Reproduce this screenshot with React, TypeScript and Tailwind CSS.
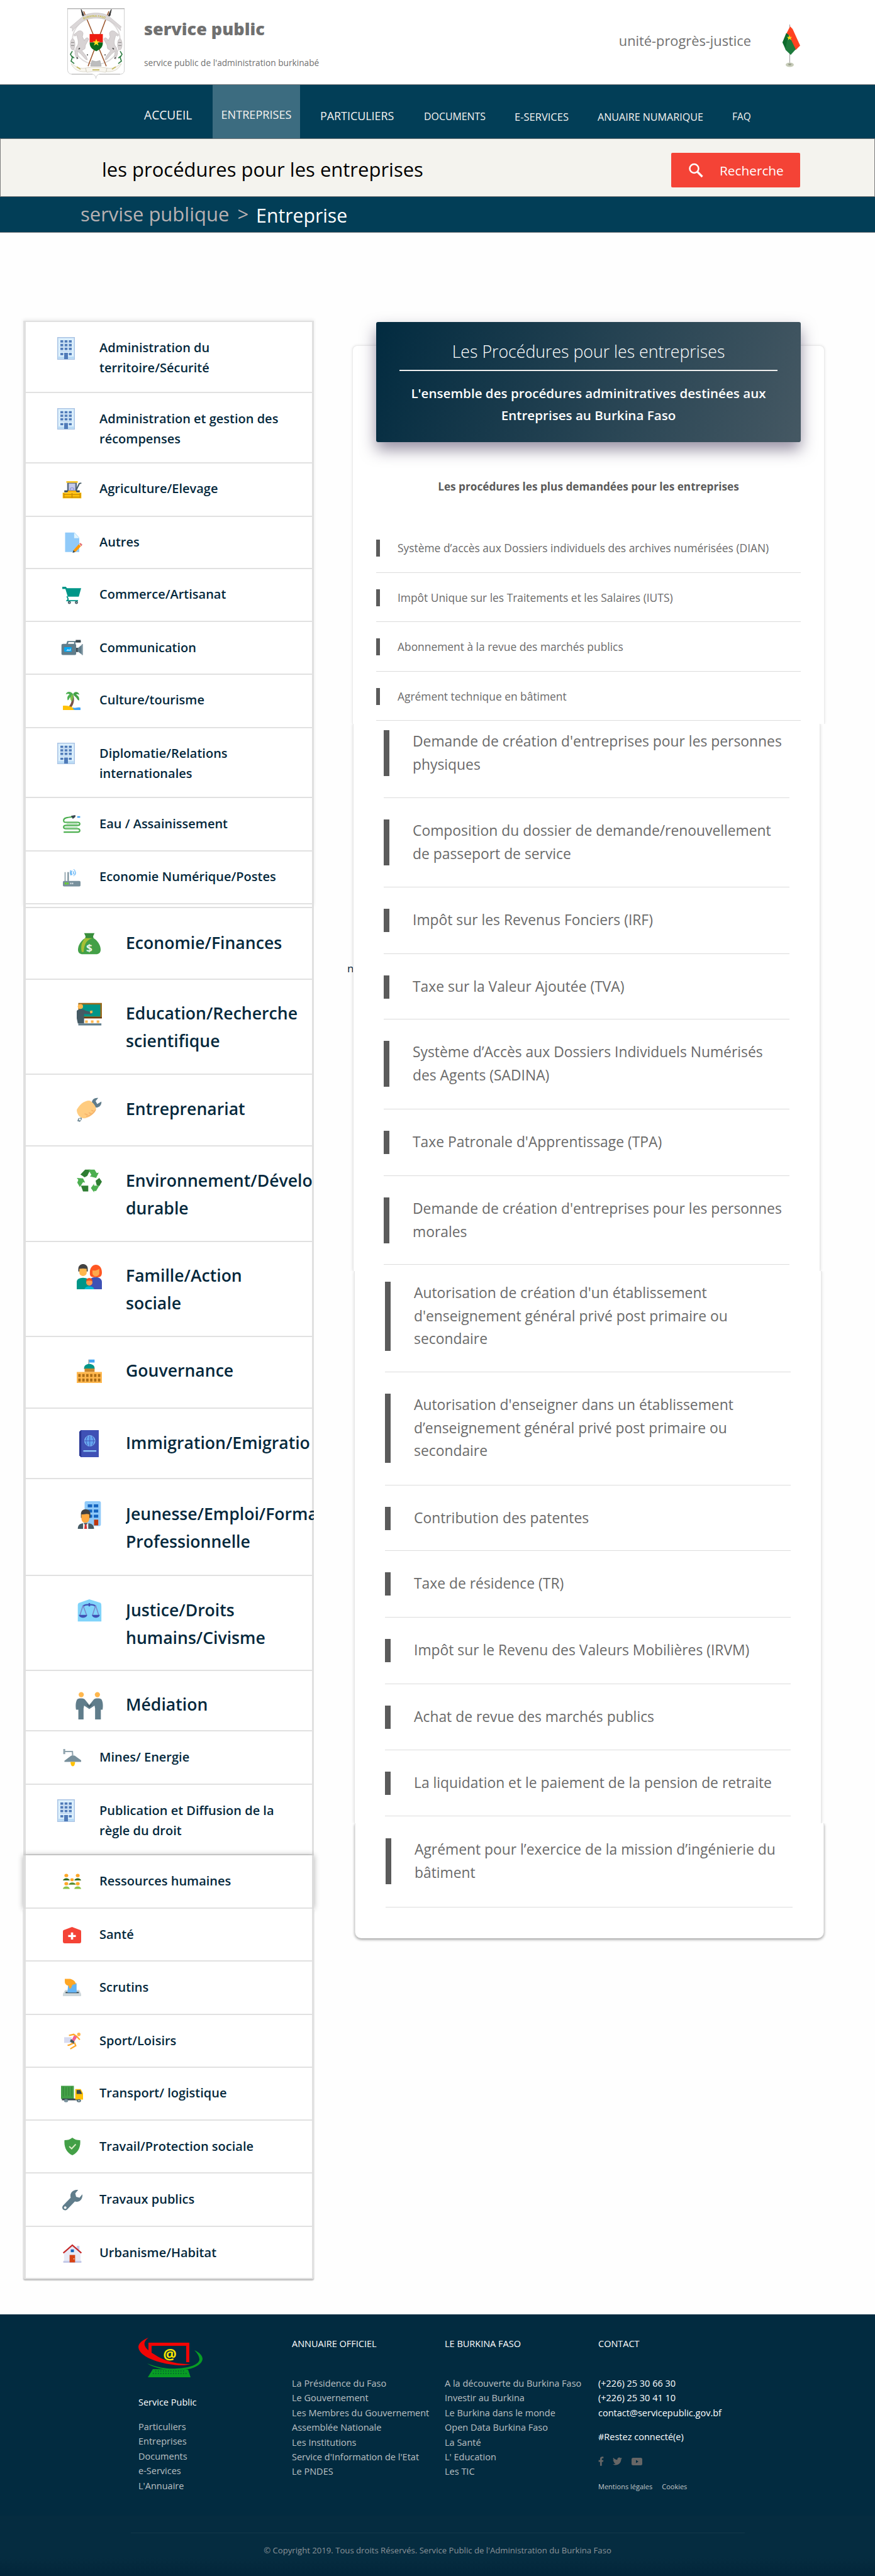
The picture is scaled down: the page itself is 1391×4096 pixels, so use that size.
import type { ReactNode } from 'react';
import { FaFacebookF, FaTwitter } from 'react-icons/fa';

type IconProps = { className: string };

function Svg({ className, children, box = '0 0 48 48' }: { className: string; children: ReactNode; box?: string }) {
  return (
    <svg viewBox={box} preserveAspectRatio="none" className={'shrink-0 ' + className} fill="none">
      {children}
    </svg>
  );
}

const Building = ({ className }: IconProps) => (
  <Svg className={className} box="0 0 28 36">
    <rect x="0.75" y="0.75" width="26.5" height="34.5" fill="#dcf0fd" stroke="#a9c3e4" strokeWidth="1.5" />
    <rect x="1.5" y="31" width="25" height="3.5" fill="#b8daf5" />
    {[5, 11, 17, 25.2].map((y) => (
      <g key={y} fill="#4f7ab8">
        <rect x="5" y={y} width="4.6" height="3.6" />
        <rect x="11.7" y={y} width="4.6" height="3.6" />
        <rect x="18.4" y={y} width="4.6" height="3.6" />
      </g>
    ))}
    <path d="M4.5 9.8h19M4.5 15.8h19M4.5 22.5h19" stroke="#a9c3e4" strokeWidth="0.8" />
    <rect x="11" y="25" width="6" height="10" fill="#4f7ab8" />
  </Svg>
);

const Tractor = ({ className }: IconProps) => (
  <Svg className={className}>
    <path d="M10 2h28v4H10z" fill="#ffc107" />
    <path d="M12 6h24v22H12z" fill="#5b6a80" />
    <path d="M16 8h16v18H16z" fill="#c5cae9" />
    <path d="M20 26v-4c0-4 8-4 8 0v4z" stroke="#8a90d8" strokeWidth="2" />
    <path d="M47 7l-5 1-8 18" stroke="#455a64" strokeWidth="3" />
    <path d="M5 26h9v5H5zM34 26h9v5h-9z" fill="#37474f" />
    <path d="M15 27h18l3 5H12z" fill="#ffb300" />
    <path d="M1 32h46v15H1z" fill="#ffc107" />
    <path d="M3 37h42M3 44h42M4 33v13M24 33v13M44 33v13" stroke="#c98a04" strokeWidth="2.4" />
  </Svg>
);

const Paper = ({ className }: IconProps) => (
  <Svg className={className}>
    <path d="M4 1h24l12 12v33H4z" fill="#90caf9" />
    <path d="M27 1l13 13H27z" fill="#e1f5fe" />
    <path d="M25 42l14-14 5 5-14 13z" fill="#ff9800" />
    <path d="M40 27l3-2 5 4-3 4z" fill="#e57373" />
    <path d="M23 48l2-6 5 4z" fill="#37474f" />
  </Svg>
);

const Cart = ({ className }: IconProps) => (
  <Svg className={className}>
    <path d="M0 0h9l3 4h36l-6 23H14L8 6H0z" fill="#009688" />
    <path d="M12 26l3 8-3 4h28" stroke="#009688" strokeWidth="3" />
    <circle cx="18" cy="43" r="4" fill="#455a64" />
    <circle cx="36" cy="43" r="4" fill="#455a64" />
    <circle cx="18" cy="43" r="1.5" fill="#b0bec5" />
    <circle cx="36" cy="43" r="1.5" fill="#b0bec5" />
  </Svg>
);

const Camera = ({ className }: IconProps) => (
  <Svg className={className}>
    <path d="M13 15l2-9h28" stroke="#607d8b" strokeWidth="3.4" />
    <path d="M30 6v9" stroke="#607d8b" strokeWidth="3" />
    <path d="M32 1h11v8H32z" fill="#37474f" />
    <rect x="1" y="13" width="32" height="34" rx="4" fill="#607d8b" />
    <rect x="7" y="23" width="16" height="14" fill="#03a9f4" />
    <path d="M11 34l4-5 3 3 3-6v8z" fill="#bbdefb" />
    <path d="M33 25h4v13h-4z" fill="#37474f" />
    <path d="M36 27l11-13v33L36 36z" fill="#607d8b" />
    <path d="M45 14h3v33h-3z" fill="#90a4ae" />
  </Svg>
);

const Palm = ({ className }: IconProps) => (
  <Svg className={className}>
    <path d="M28 10c5 12 1 24-5 31h-9c9-8 12-18 10-31z" fill="#795548" />
    <path d="M28 8C22-1 10 0 8 8c6-2 8-1 10 1-6 2-7 8-5 14 4-1 4-6 7-8 0 5 2 8 5 11 3-5 4-12 3-18z" fill="#4caf50" />
    <path d="M28 8c2-8 14-8 17 1-5-2-7-2-9 0 6 2 10 8 8 15-5-2-6-7-9-9-2-2-6-4-7-7z" fill="#43a047" />
    <path d="M26 8c-6 6-6 10-3 18 4-4 5-12 3-18z" fill="#8bc34a" />
    <path d="M0 37c12-1 22 2 29 6l19 1v4H0z" fill="#ffc107" />
    <path d="M27 41c6 4 11-2 21 1v6H34c-4 0-7-3-7-7z" fill="#42a5f5" />
  </Svg>
);

const Hose = ({ className }: IconProps) => (
  <Svg className={className}>
    <path d="M26 5C10 6 2 8 2 14c0 6 4 5 10 5h28c8 0 8 8 0 8H8c-8 0-8 9 0 9h32c8 0 8 9 0 9H2" stroke="#4caf50" strokeWidth="3.6" />
    <path d="M6 32h34M10 23h30" stroke="#a5d6a7" strokeWidth="2" />
    <path d="M22 2l12-2v5l-7 5z" fill="#37474f" />
    <path d="M39 3h8v4h-8z" fill="#42a5f5" />
  </Svg>
);

const Router = ({ className }: IconProps) => (
  <Svg className={className}>
    <path d="M6 8v26M15 8v26" stroke="#90a4ae" strokeWidth="3" />
    <path d="M13.500 8v24" stroke="#546e7a" strokeWidth="1.6" />
    <rect x="0" y="32" width="48" height="15" rx="3" fill="#78909c" />
    <path d="M5 39h12" stroke="#64dd17" strokeWidth="5" strokeDasharray="4 2" />
    <path d="M20 39h9" stroke="#e0e6ea" strokeWidth="4" strokeDasharray="3 2" />
    <path d="M25 4c-3 4-3 8 0 12M32 4c3 4 3 8 0 12M21 3c-1 3-1 10 1 14M28.500 6v8" stroke="#64b5f6" strokeWidth="2.4" />
    <path d="M29 0c6 4 6 13 0 19" stroke="#90caf9" strokeWidth="2" />
  </Svg>
);

const MoneyBag = ({ className }: IconProps) => (
  <Svg className={className}>
    <path d="M13 1h22l-3 7 1 5H15l1-5z" fill="#388e3c" />
    <path d="M15 12h18c8 5 15 15 15 25 0 7-4 10-10 10H10C4 47 0 44 0 37c0-10 7-20 15-25z" fill="#43a047" />
    <path d="M15 12h16c-12 3-18 12-19 30H8c-3-12 0-22 7-30z" fill="#a4bf35" />
    <text x="24" y="41" textAnchor="middle" fontFamily="Open Sans, sans-serif" fontSize="23" fontWeight="700" fill="#e8f5e9">$</text>
  </Svg>
);

const Teacher = ({ className }: IconProps) => (
  <Svg className={className}>
    <path d="M3 1h45v31H3z" fill="#9a6a1c" />
    <path d="M6 4h39v24H6z" fill="#009688" />
    <path d="M8 32h40v-3H8z" fill="#6d3b12" />
    <circle cx="7" cy="8" r="5" fill="#ffb74d" />
    <path d="M0 17c2-4 12-5 16-1l13 4-1 4-14-1v19H2L0 32z" fill="#455a64" />
    <path d="M25 17l5-1v5l-4 1z" fill="#ffb74d" />
    <path d="M16 36h5v5h-5zM27 36h5v5h-5zM38 36h5v5h-5z" fill="#ffb74d" />
    <path d="M3 42h44v4H3z" fill="#607d8b" />
  </Svg>
);

const HandWrench = ({ className }: IconProps) => (
  <Svg className={className}>
    <path d="M29 12c-1-7 4-12 12-11l-5 6 3 6 8-5c1 8-6 14-14 11z" fill="#607d8b" />
    <path d="M0 24C5 14 14 6 24 6c6 2 13 11 13 17-4 10-13 16-22 18C6 41 0 33 0 24z" fill="#ffcc80" />
    <path d="M18 37c6 0 15-6 18-13M15 32l6 2M23 30l5 2M28 25l4 2" stroke="#f5b26b" strokeWidth="2" />
    <path d="M9 39l-6 2-2 5 5 2 4-6z" fill="#78909c" />
    <circle cx="6" cy="43" r="1.800" fill="#fff" />
  </Svg>
);

const Recycle = ({ className }: IconProps) => (
  <Svg className={className}>
    <path d="M16 1h10l-6 13-5 3-8-6z" fill="#2e7d32" />
    <path d="M22 1h12l4 7 4-1-5 11-12-3 3-3z" fill="#4caf50" />
    <path d="M36 24l7-6 5 8-5 9-5-2z" fill="#2e7d32" />
    <path d="M27 39l6-9v4h10l-6 11h-4v3z" fill="#4caf50" />
    <path d="M8 34h14v12H12z" fill="#2e7d32" />
    <path d="M0 18l12 1 4 9-4-1-6 10-5-9 2-6z" fill="#4caf50" />
  </Svg>
);

const Family = ({ className }: IconProps) => (
  <Svg className={className}>
    <path d="M0 34c0-6 7-8 12-8s12 2 12 7v15H0z" fill="#009688" />
    <path d="M24 33c0-5 6-8 12-8s12 3 12 9v14H24z" fill="#3f51b5" />
    <path d="M3 9c0-12 18-12 18 0v5H3z" fill="#424242" />
    <path d="M5 9c5-1 9-1 14 0v7c0 9-14 9-14 0z" fill="#ffb74d" />
    <path d="M25 18c-1-22 23-22 23-2 0 8-4 10-12 9-6 0-11 0-11-7z" fill="#ff5722" />
    <path d="M30 12c4 1 9 0 13-3v8c0 8-13 8-13 0z" fill="#ffa94d" />
    <circle cx="24" cy="35" r="6" fill="#ff9a50" />
    <path d="M18 33c0-9 12-9 12 0-3-2-9-2-12 0z" fill="#f4511e" />
    <path d="M15 48c0-7 18-7 18 0z" fill="#00bcd4" />
  </Svg>
);

const Government = ({ className }: IconProps) => (
  <Svg className={className}>
    <path d="M24 1h10v6H24z" fill="#42a5f5" />
    <path d="M23 1v10" stroke="#78909c" strokeWidth="1.500" />
    <path d="M14 18c0-11 20-11 20 0v2H14z" fill="#009688" />
    <path d="M15 19h19v7H15z" fill="#c9852b" />
    <path d="M0 26h48v22H0z" fill="#ffb74d" />
    <path d="M3 33h42M3 42h42" stroke="#ab6d17" strokeWidth="6" strokeDasharray="4.500 3" />
  </Svg>
);

const Passport = ({ className }: IconProps) => (
  <Svg className={className}>
    <path d="M0 3l4-3h44v48H4l-4-3z" fill="#3f51b5" />
    <path d="M0 3l5-3v48l-5-3z" fill="#283593" />
    <ellipse cx="26" cy="19" rx="13" ry="9.500" fill="#64a5f0" stroke="#90caf9" />
    <path d="M26 10v19M13 19h26M20 11c-4 5-4 12 0 16M32 11c4 5 4 12 0 16" stroke="#3f51b5" strokeWidth="1.300" />
    <path d="M10 37h32" stroke="#90caf9" strokeWidth="2.600" />
  </Svg>
);

const Youth = ({ className }: IconProps) => (
  <Svg className={className}>
    <rect x="15" y="0" width="31" height="43" rx="3" fill="#90caf9" />
    <path d="M21 8h20M21 17h20M21 26h20" stroke="#1565c0" strokeWidth="5" strokeDasharray="8.500 3" />
    <path d="M33 32h8v10h-8z" fill="#bf360c" />
    <path d="M8 23c-1-12 19-12 18 0v6H8z" fill="#424242" />
    <path d="M9 23c6 0 10-2 15 0v7c0 10-15 10-15 0z" fill="#ffa940" />
    <path d="M2 48c0-8 6-10 15-10s16 2 16 10z" fill="#455a64" />
    <path d="M12 37l5 5 5-5v11H12z" fill="#eceff1" />
    <path d="M15.500 40h3l1 8h-5z" fill="#d32f2f" />
  </Svg>
);

const Justice = ({ className }: IconProps) => (
  <Svg className={className}>
    <path d="M24 0l20 7c3 1 3 4 3 8v32H2V14c0-5 1-6 4-7z" fill="#81d4fa" />
    <path d="M12 15c4-5 20-5 24 0M24 8v7" stroke="#3f51b5" strokeWidth="3" />
    <path d="M12 13L6 34M12 13l7 21M36 13l-6 21M36 13l6 21" stroke="#7986cb" strokeWidth="1.800" />
    <path d="M4 33h16c-1 8-15 8-16 0zM29 33h15c-1 8-14 8-15 0z" fill="#3f51b5" />
  </Svg>
);

const Mediation = ({ className }: IconProps) => (
  <Svg className={className}>
    <circle cx="10" cy="5" r="4.500" fill="#ffb74d" />
    <circle cx="38" cy="5" r="4.500" fill="#ffb74d" />
    <path d="M3 13c3-2 10-2 13 0l8 10 8-10c3-2 10-2 13 0 3 5 3 12 2 18h-3v17H34V29l-1-5-9 6-9-6-1 5v19H5V31H1c-1-6-1-13 2-18z" fill="#607d8b" />
    <path d="M20 22l4 4 4-4" stroke="#455a64" strokeWidth="1.500" />
  </Svg>
);

const Lamp = ({ className }: IconProps) => (
  <Svg className={className}>
    <path d="M1 0h5v14H1z" fill="#90a4ae" />
    <path d="M5 7h20l1 14" stroke="#90a4ae" strokeWidth="3.400" />
    <path d="M22 18h9l17 13v4H4v-3z" fill="#78909c" />
    <path d="M20 35h12c0 6-2 12-6 12s-6-6-6-12z" fill="#ffc107" />
  </Svg>
);

const People = ({ className }: IconProps) => (
  <Svg className={className}>
    <path d="M0 21c2-9 16-9 18 0zM30 21c2-9 16-9 18 0z" fill="#33691e" />
    <path d="M15 34c2-9 17-9 19 0z" fill="#558b2f" />
    <path d="M0 47c1-10 17-10 18 0zM30 47c1-10 17-10 18 0z" fill="#8bc34a" />
    <g fill="#ffa726">
      <circle cx="9" cy="6" r="5" />
      <circle cx="39" cy="6" r="5" />
      <circle cx="24" cy="19" r="4.500" />
      <circle cx="9" cy="31" r="5" />
      <circle cx="39" cy="31" r="5" />
    </g>
  </Svg>
);

const Health = ({ className }: IconProps) => (
  <Svg className={className}>
    <path d="M24 0l22 9c2 1 2 4 2 8v24c0 5-1 7-5 7H5c-4 0-5-2-5-7V17c0-4 0-7 2-8z" fill="#f44336" />
    <path d="M24 16v21M14 26.500h20" stroke="#fff" strokeWidth="6" />
  </Svg>
);

const Vote = ({ className }: IconProps) => (
  <Svg className={className}>
    <path d="M6 31h37l5 11v6H0v-6z" fill="#cfd8dc" />
    <path d="M7 38h35" stroke="#455a64" strokeWidth="4" />
    <path d="M14 15l22-2v25H12z" fill="#64b5f6" />
    <path d="M5 1h14c8 2 14 7 15 14l-9 2-4 10c-4 1-6-3-5-7C9 19 5 14 5 9z" fill="#ffa726" />
  </Svg>
);

const Runner = ({ className }: IconProps) => (
  <Svg className={className}>
    <path d="M0 13h22v16H0z" fill="#d7dbf0" />
    <circle cx="43" cy="5" r="5" fill="#ffb74d" />
    <path d="M14 8l14-3 9 6 9 9M30 28l4 9-16 9" stroke="#ffa726" strokeWidth="4" />
    <path d="M29 8l9 4-8 13-8-4z" fill="#f06292" />
    <path d="M20 18l10 7-2 8-11-8z" fill="#455a64" />
    <path d="M26 30l-11 5-5 1" stroke="#ffa726" strokeWidth="4" />
  </Svg>
);

const Truck = ({ className }: IconProps) => (
  <Svg className={className}>
    <path d="M0 1h28v37H0z" fill="#43a047" />
    <path d="M5 3v28M11 5v24M17 5v24M23 3v28" stroke="#2e7d32" strokeWidth="1.300" />
    <path d="M2 37h40v5H2z" fill="#37474f" />
    <path d="M31 10h12l5 12v18H31z" fill="#ffc107" />
    <path d="M34 13h8l4 11H34z" fill="#37474f" />
    <circle cx="11" cy="43" r="4.500" fill="#78909c" />
    <circle cx="39" cy="43" r="4.500" fill="#546e7a" />
    <circle cx="39" cy="43" r="1.800" fill="#cfd8dc" />
  </Svg>
);

const Shield = ({ className }: IconProps) => (
  <Svg className={className}>
    <path d="M24 0c6 5 14 7 23 7 2 18-6 34-23 41C7 41-1 25 1 7c9 0 17-2 23-7z" fill="#43a047" />
    <path d="M15 24l7 6 12-12" stroke="#dcedc8" strokeWidth="3.600" />
  </Svg>
);

const Wrench = ({ className }: IconProps) => (
  <Svg className={className}>
    <path d="M38 0l-7 8 2 8 8 2 7-8c1 12-7 20-18 17L12 45c-7 6-16-1-10-9l18-18C17 7 26-1 38 0z" fill="#607d8b" />
    <circle cx="7" cy="41" r="3" fill="#fff" />
  </Svg>
);

const House = ({ className }: IconProps) => (
  <Svg className={className}>
    <path d="M35 5h7v12h-7z" fill="#c5cae9" />
    <path d="M24 5l21 17v25H3V22z" fill="#e8eaf6" />
    <path d="M1 43h46v5H1z" fill="#c5cae9" />
    <path d="M1 23L24 3l23 20" stroke="#c62828" strokeWidth="3.600" />
    <path d="M17 28h14v19H17z" fill="#d84315" />
    <path d="M20 14h8v7h-8z" fill="#1565c0" />
    <circle cx="28" cy="38" r="1.300" fill="#fff" />
  </Svg>
);

type Row = { h: string; pt: string; icon: (p: IconProps) => ReactNode; at: string; lines: string[] };

const top: Row[] = [
  { h: 'h-[113px]', pt: 'pt-[25px]', icon: Building, at: 'ml-[50px] mt-[24px] w-[28px] h-[36px]', lines: ['Administration du', 'territoire/Sécurité'] },
  { h: 'h-[112px]', pt: 'pt-[25px]', icon: Building, at: 'ml-[50px] mt-[24px] w-[28px] h-[34px]', lines: ['Administration et gestion des', 'récompenses'] },
  { h: 'h-[85px]', pt: 'pt-[24px]', icon: Tractor, at: 'ml-[58px] mt-[27px] w-[31px] h-[29px]', lines: ['Agriculture/Elevage'] },
  { h: 'h-[83px]', pt: 'pt-[24px]', icon: Paper, at: 'ml-[60px] mt-[24px] w-[30px] h-[33px]', lines: ['Autres'] },
  { h: 'h-[84px]', pt: 'pt-[24px]', icon: Cart, at: 'ml-[58px] mt-[28px] w-[30px] h-[28px]', lines: ['Commerce/Artisanat'] },
  { h: 'h-[84px]', pt: 'pt-[25px]', icon: Camera, at: 'ml-[56px] mt-[28px] w-[35px] h-[25px]', lines: ['Communication'] },
  { h: 'h-[85px]', pt: 'pt-[24px]', icon: Palm, at: 'ml-[59px] mt-[26px] w-[28px] h-[30px]', lines: ['Culture/tourisme'] },
  { h: 'h-[111px]', pt: 'pt-[24px]', icon: Building, at: 'ml-[50px] mt-[23px] w-[28px] h-[34px]', lines: ['Diplomatie/Relations', 'internationales'] },
  { h: 'h-[85px]', pt: 'pt-[25px]', icon: Hose, at: 'ml-[59px] mt-[27px] w-[28px] h-[29px]', lines: ['Eau / Assainissement'] },
  { h: 'h-[84px]', pt: 'pt-[24px]', icon: Router, at: 'ml-[59px] mt-[28px] w-[28px] h-[28px]', lines: ['Economie Numérique/Postes'] },
];

const middle: Row[] = [
  { h: 'h-[114px]', pt: 'pt-[33px]', icon: MoneyBag, at: 'ml-[83px] mt-[39px] w-[36px] h-[35px]', lines: ['Economie/Finances'] },
  { h: 'h-[151px]', pt: 'pt-[31px]', icon: Teacher, at: 'ml-[81px] mt-[36px] w-[40px] h-[38px]', lines: ['Education/Recherche', 'scientifique'] },
  { h: 'h-[114px]', pt: 'pt-[32px]', icon: HandWrench, at: 'ml-[81px] mt-[36px] w-[40px] h-[39px]', lines: ['Entreprenariat'] },
  { h: 'h-[152px]', pt: 'pt-[32px]', icon: Recycle, at: 'ml-[81px] mt-[36px] w-[40px] h-[37px]', lines: ['Environnement/Dévelo', 'durable'] },
  { h: 'h-[151px]', pt: 'pt-[31px]', icon: Family, at: 'ml-[81px] mt-[35px] w-[40px] h-[40px]', lines: ['Famille/Action', 'sociale'] },
  { h: 'h-[114px]', pt: 'pt-[31px]', icon: Government, at: 'ml-[81px] mt-[35px] w-[40px] h-[38px]', lines: ['Gouvernance'] },
  { h: 'h-[112px]', pt: 'pt-[32px]', icon: Passport, at: 'ml-[85px] mt-[34px] w-[31px] h-[43px]', lines: ['Immigration/Emigratio'] },
  { h: 'h-[154px]', pt: 'pt-[33px]', icon: Youth, at: 'ml-[81px] mt-[35px] w-[40px] h-[44px]', lines: ['Jeunesse/Emploi/Forma', 'Professionnelle'] },
  { h: 'h-[151px]', pt: 'pt-[32px]', icon: Justice, at: 'ml-[81px] mt-[37px] w-[40px] h-[36px]', lines: ['Justice/Droits', 'humains/Civisme'] },
  { h: 'h-[96px]', pt: 'pt-[31px]', icon: Mediation, at: 'ml-[79px] mt-[33px] w-[44px] h-[44px]', lines: ['Médiation'] },
];

const bottom: Row[] = [
  { h: 'h-[85px]', pt: 'pt-[25px]', icon: Lamp, at: 'ml-[59px] mt-[28px] w-[29px] h-[28px]', lines: ['Mines/ Energie'] },
  { h: 'h-[112px]', pt: 'pt-[25px]', icon: Building, at: 'ml-[50px] mt-[23px] w-[28px] h-[36px]', lines: ['Publication et Diffusion de la', 'règle du droit'] },
  { h: 'h-[85px]', pt: 'pt-[25px]', icon: People, at: 'ml-[59px] mt-[29px] w-[29px] h-[25px]', lines: ['Ressources humaines'] },
  { h: 'h-[84px]', pt: 'pt-[25px]', icon: Health, at: 'ml-[59px] mt-[29px] w-[29px] h-[26px]', lines: ['Santé'] },
  { h: 'h-[85px]', pt: 'pt-[25px]', icon: Vote, at: 'ml-[59px] mt-[27px] w-[29px] h-[28px]', lines: ['Scrutins'] },
  { h: 'h-[84px]', pt: 'pt-[25px]', icon: Runner, at: 'ml-[61px] mt-[28px] w-[26px] h-[27px]', lines: ['Sport/Loisirs'] },
  { h: 'h-[84px]', pt: 'pt-[24px]', icon: Truck, at: 'ml-[56px] mt-[28px] w-[35px] h-[27px]', lines: ['Transport/ logistique'] },
  { h: 'h-[84px]', pt: 'pt-[25px]', icon: Shield, at: 'ml-[61px] mt-[27px] w-[26px] h-[28px]', lines: ['Travail/Protection sociale'] },
  { h: 'h-[85px]', pt: 'pt-[25px]', icon: Wrench, at: 'ml-[58px] mt-[26px] w-[32px] h-[33px]', lines: ['Travaux publics'] },
  { h: 'h-[83px]', pt: 'pt-[25px]', icon: House, at: 'ml-[59px] mt-[27px] w-[30px] h-[30px]', lines: ['Urbanisme/Habitat'] },
];

function SideRow({ row, large }: { row: Row; large?: boolean }) {
  const Icon = row.icon;
  return (
    <li className={'flex border-b-2 border-[#e1e1e1] bg-white ' + row.h}>
      <div className={large ? 'w-[159px] shrink-0' : 'w-[117px] shrink-0'}>
        <Icon className={row.at} />
      </div>
      <div
        className={
          'whitespace-nowrap font-semibold text-[#04283c] ' +
          row.pt +
          (large ? ' -mr-[3px] w-[299px] overflow-hidden text-[26.6px] leading-[44px]' : ' text-[20px] leading-[32px]')
        }
      >
        {row.lines.map((l) => (
          <div key={l}>{l}</div>
        ))}
      </div>
    </li>
  );
}

function Sidebar() {
  return (
    <aside className="w-[462px] shrink-0 pt-[140px]">
      <ul className="border-l-4 border-r-[3px] border-t-2 border-[#e0e0e0] pb-[4px] shadow-[0_-2px_5px_rgba(0,0,0,0.08)]">
        {top.map((r) => (
          <SideRow key={r.lines[0]} row={r} />
        ))}
      </ul>
      <ul className="border-l-4 border-r-[3px] border-t-2 border-[#e0e0e0]">
        {middle.map((r) => (
          <SideRow key={r.lines[0]} row={r} large />
        ))}
      </ul>
      <ul className="border-l-4 border-r-[3px] border-[#e0e0e0]">
        {bottom.slice(0, 2).map((r) => (
          <SideRow key={r.lines[0]} row={r} />
        ))}
      </ul>
      <div className="relative rounded-[2px] shadow-[0_0_10px_rgba(0,0,0,0.32)]">
        <ul className="border-l-4 border-r-[3px] border-[#dcdcdc]">
          <SideRow row={bottom[2]} />
        </ul>
      </div>
      <ul className="relative rounded-b-[3px] border-l-4 border-r-[3px] border-[#e0e0e0] bg-white shadow-[0_2px_2px_rgba(0,0,0,0.28)]">
        {bottom.slice(3).map((r) => (
          <SideRow key={r.lines[0]} row={r} />
        ))}
      </ul>
    </aside>
  );
}

type Proc = { h: string; pt: string; lines: string[] };

const listed: Proc[] = [
  { h: 'h-[79px]', pt: '', lines: ['Système d’accès aux Dossiers individuels des archives numérisées (DIAN)'] },
  { h: 'h-[78px]', pt: '', lines: ['Impôt Unique sur les Traitements et les Salaires (IUTS)'] },
  { h: 'h-[79px]', pt: '', lines: ['Abonnement à la revue des marchés publics'] },
  { h: 'h-[78px]', pt: '', lines: ['Agrément technique en bâtiment'] },
];

const second: Proc[] = [
  { h: 'h-[118px]', pt: 'pt-[10px]', lines: ["Demande de création d'entreprises pour les personnes", 'physiques'] },
  { h: 'h-[142px]', pt: 'pt-[34px]', lines: ['Composition du dossier de demande/renouvellement', 'de passeport de service'] },
  { h: 'h-[106px]', pt: 'pt-[34px]', lines: ['Impôt sur les Revenus Fonciers (IRF)'] },
  { h: 'h-[104px]', pt: 'pt-[34px]', lines: ['Taxe sur la Valeur Ajoutée (TVA)'] },
  { h: 'h-[143px]', pt: 'pt-[34px]', lines: ['Système d’Accès aux Dossiers Individuels Numérisés', 'des Agents (SADINA)'] },
  { h: 'h-[106px]', pt: 'pt-[34px]', lines: ["Taxe Patronale d'Apprentissage (TPA)"] },
  { h: 'h-[141px]', pt: 'pt-[34px]', lines: ["Demande de création d'entreprises pour les personnes", 'morales'] },
];

const third: Proc[] = [
  { h: 'h-[161px]', pt: 'pt-[17px]', lines: ["Autorisation de création d'un établissement", "d'enseignement général privé post primaire ou", 'secondaire'] },
  { h: 'h-[180px]', pt: 'pt-[34px]', lines: ["Autorisation d'enseigner dans un établissement", 'd’enseignement général privé post primaire ou', 'secondaire'] },
  { h: 'h-[104px]', pt: 'pt-[34px]', lines: ['Contribution des patentes'] },
  { h: 'h-[106px]', pt: 'pt-[34px]', lines: ['Taxe de résidence (TR)'] },
  { h: 'h-[106px]', pt: 'pt-[34px]', lines: ['Impôt sur le Revenu des Valeurs Mobilières (IRVM)'] },
  { h: 'h-[105px]', pt: 'pt-[34px]', lines: ['Achat de revue des marchés publics'] },
  { h: 'h-[105px]', pt: 'pt-[34px]', lines: ['La liquidation et le paiement de la pension de retraite'] },
];

const last: Proc[] = [
  { h: 'h-[134px]', pt: 'pt-[24px]', lines: ['Agrément pour l’exercice de la mission d’ingénierie du', 'bâtiment'] },
];

function ProcList({ rows }: { rows: Proc[] }) {
  return (
    <ul>
      {rows.map((r) => (
        <li key={r.lines.join()} className={'flex items-start border-b border-[#dcdcdc] ' + r.h + ' ' + r.pt}>
          <div className="whitespace-nowrap border-l-[9px] border-[#5b5b5b] pl-[37px] text-[22.85px] leading-[36.5px] text-[#6a6a6a]">
            {r.lines.map((l) => (
              <div key={l}>{l}</div>
            ))}
          </div>
        </li>
      ))}
    </ul>
  );
}

function Procedures() {
  return (
    <section className="relative ml-[61px] w-[752px] pt-[179px]">
      <div className="absolute left-[-8px] top-[1155px] text-[17px] leading-[30px] text-[#04283c]">n</div>
      <div className="relative h-[602px] w-[751px] rounded-t-lg border-x border-t border-[#ebebeb] bg-white shadow-[0_0_4px_rgba(0,0,0,0.1)] [clip-path:inset(-60px_-8px_0)]">
        <div className="-mt-[38px] ml-[37px] h-[191px] w-[675px] rounded-[3px] bg-[linear-gradient(110deg,#022b40_0%,#455863_100%)] pt-[29px] text-center text-white shadow-[0_12px_24px_rgba(48,34,72,0.5)]">
          <h1 className="text-[26.7px] font-light leading-[36px]">Les Procédures pour les entreprises</h1>
          <div className="mx-auto mt-[11px] h-[2px] w-[601px] bg-[#eeeeee]" />
          <p className="mt-[18px] text-[20.6px] font-semibold leading-[35.4px]">
            L'ensemble des procédures adminitratives destinées aux
            <br />
            Entreprises au Burkina Faso
          </p>
        </div>
        <h2 className="mt-[59px] text-center text-[17.2px] font-bold leading-[24px] text-[#5b5b5b]">
          Les procédures les plus demandées pour les entreprises
        </h2>
        <ul className="ml-[37px] mt-[46px] w-[675px]">
          {listed.map((r) => (
            <li key={r.lines[0]} className={'border-b border-[#dcdcdc] pt-[26px] ' + r.h}>
              <div className="whitespace-nowrap border-l-[6px] border-[#5b5b5b] pl-[28px] text-[17.4px] leading-[27px] text-[#6a6a6a]">
                {r.lines[0]}
              </div>
            </li>
          ))}
        </ul>
      </div>
      <div className="relative ml-px h-[870px] w-[743px] border-x border-[#e6e6e6] bg-white pl-[48px] pr-[48px] shadow-[0_0_5px_rgba(0,0,0,0.15)] [clip-path:inset(0_-8px)]">
        <ProcList rows={second} />
      </div>
      <div className="relative ml-[3px] h-[878px] w-[743px] border-x border-[#e6e6e6] bg-white pl-[48px] pr-[48px] shadow-[0_0_5px_rgba(0,0,0,0.15)] [clip-path:inset(0_-8px)]">
        <ProcList rows={third} />
      </div>
      <div className="relative ml-[4px] h-[183px] w-[746px] rounded-b-[10px] border-x border-[#e6e6e6] bg-white pl-[48px] pr-[49px] shadow-[0_2px_4px_rgba(0,0,0,0.4)] [clip-path:inset(0_-8px_-8px)]">
        <ProcList rows={last} />
      </div>
    </section>
  );
}

function CoatOfArms() {
  return (
    <svg viewBox="0 0 91 113" preserveAspectRatio="none" className="ml-[107px] mt-[13px] h-[112px] w-[91px] shrink-0" fill="none">
      <path d="M0.500 0.500h90v99c0 4-2 6-6 6.500H51c-3 0-5 3-5.500 7-.5-4-2.500-7-5.500-7H7c-4-.5-6-2.500-6.500-6.500z" stroke="#cfcfcf" strokeWidth="1" fill="#fff" />
      <path d="M0 .7h91" stroke="#b5b5b5" strokeWidth="1.400" />
      <path d="M7 106h33M51 106h33" stroke="#c9c9c9" strokeWidth="1.600" />
      <circle cx="46" cy="52" r="38" stroke="#dedbdb" strokeWidth="2" />
      <path d="M26 5l36 88M66 5L33 93" stroke="#9a5228" strokeWidth="1.500" />
      <path d="M22 2l3 6 2 5-3-1zM70 2l-3 6-2 5 3-1z" fill="#333" stroke="#333" />
      <path d="M25 13C33 6 58 6 66 13l20 17-2 2 1 4-4-4C73 23 66 19 62 19c-8-4-24-4-33 0-5 2-10 7-18 14l-3 4v-5l-4-1z" fill="#dbd7d8" stroke="#b9b5b6" strokeWidth=".6" />
      <path id="motto-arc" d="M26 18.500c12-6 28-6 42 2" />
      <text fontFamily="Open Sans, sans-serif" fontSize="4.800" fontWeight="700" fill="#c9bd52">
        <textPath href="#motto-arc">BURKINA FASO</textPath>
      </text>
      <g fill="#d8d3d4" stroke="#b5b0b1" strokeWidth=".6">
        <path d="M17 37c4-2 8 0 8 4l-1 5 3 6c2-5 6-6 7-2l-5 9-1 6-5 3 7 9 2 6-3-1-8-9-5-4 1 9-2 4-3-9 2-10c3-3 4-6 3-12l-2-8-3 2-2-2z" />
        <path d="M75 37c-4-2-8 0-8 4l1 5-3 6c-2-5-6-6-7-2l5 9 1 6 5 3-7 9-2 6 3-1 8-9 5-4-1 9 2 4 3-9-2-10c-3-3-4-6-3-12l2-8 3 2 2-2z" />
        <ellipse cx="8.500" cy="58" rx="3.600" ry="9" />
        <ellipse cx="83.500" cy="58" rx="3.600" ry="9" />
      </g>
      <path d="M15 79l2 2M32 74v2M18 66l2-2M77 79l-2 2M60 74v2M74 66l-2-2" stroke="#444" strokeWidth="1.600" />
      <path d="M6 55h5M6 60h5M81 55h5M81 60h5" stroke="#777" strokeWidth=".8" />
      <path d="M35.500 41.500h21V55h-21z" fill="#ef1c10" />
      <path d="M35.500 55h21c0 8-4 11-10.500 14-6.500-3-10.500-6-10.500-14z" fill="#0b6a1c" />
      <path d="M46 49l1.500 4.200h4.300l-3.500 2.600 1.300 4.300L46 57.500l-3.600 2.600 1.300-4.300-3.500-2.600h4.300z" fill="#fde320" />
      <path d="M8 69l-3 5 3 5-2 6 5 4M84 69l3 5-3 5 2 6-5 4M6 76l5 4M86 76l-5 4" stroke="#2f7d43" strokeWidth="1.700" />
      <path d="M39 84l6.500 1.500L52 84l2 9h-17z" fill="#bdbdbd" stroke="#999" strokeWidth=".5" />
      <path d="M6 89c6 2 9 9 23 7l1 6c-12 1-20-4-24-13zM86 89c-6 2-9 9-23 7l-1 6c12 1 20-4 24-13zM29 96c10-2 23-2 34 0l-2 7c-9-2-20-2-30 0z" fill="#f8f6ef" stroke="#cfcbbd" strokeWidth=".7" />
      <path d="M15 94l6 4M71 98l6-4M40 99h11" stroke="#c4b75a" strokeWidth="1.800" />
    </svg>
  );
}

function Header() {
  return (
    <header className="flex h-[134px] bg-white">
      <CoatOfArms />
      <div className="ml-[31px] w-[280px] pt-[28px]">
        <div className="whitespace-nowrap text-[27px] font-extrabold leading-[36px] text-[#707070]">service public</div>
        <div className="mt-[26px] whitespace-nowrap text-[13.7px] leading-[20px] text-[#707070]">
          service public de l'administration burkinabé
        </div>
      </div>
      <div className="ml-auto mr-[50px] mt-[50px] text-[21.8px] leading-[30px] text-[#707070]">unité-progrès-justice</div>
      <svg viewBox="0 0 28 69" preserveAspectRatio="none" className="mr-[119px] mt-[39px] h-[68px] w-[28px]" fill="none">
        <path d="M11.500 0v64" stroke="#9a9a9a" strokeWidth="1" />
        <path d="M12 3l4 4 12 27-7 7L6 15z" fill="#ff4220" />
        <path d="M6 14l4 3 11 23-8 9-8-8-5-12z" fill="#1d7a3c" />
        <path d="M6 14l3 2-4 22-5-9z" fill="#0d6b2d" />
        <path d="M11 17l1 3h3l-2 2 1 3-3-2-2 2v-3l-2-2h3z" fill="#fdd91a" />
        <ellipse cx="11.500" cy="65" rx="6.500" ry="3.600" fill="#c6cbb8" />
        <ellipse cx="11.500" cy="64.500" rx="2.500" ry="1.500" fill="#999f8c" />
      </svg>
    </header>
  );
}

function Nav() {
  return (
    <nav className="flex h-[87px] whitespace-nowrap border-b border-t border-[#6f7478] bg-[#023e57] leading-[28px] text-[#f6f3f1]">
      <a className="ml-[229px] w-[77px] pt-[34px] text-[19.2px]">ACCUEIL</a>
      <a className="ml-[32px] w-[139px] bg-[#3c6c80] pt-[33px] text-center text-[18.1px]">ENTREPRISES</a>
      <a className="ml-[32px] w-[118px] pt-[35px] text-[17.9px]">PARTICULIERS</a>
      <a className="ml-[47px] w-[98px] pt-[36px] text-[15.9px]">DOCUMENTS</a>
      <a className="ml-[46px] w-[86px] pt-[37px] text-[16.5px]">E-SERVICES</a>
      <a className="ml-[46px] w-[169px] pt-[37px] text-[16.1px]">ANUAIRE NUMARIQUE</a>
      <a className="ml-[45px] pt-[37px] text-[15.4px]">FAQ</a>
    </nav>
  );
}

function SearchBand() {
  return (
    <div className="flex h-[92px] border-x border-b border-[#7c7c7c] bg-[#f4f3ee]">
      <div className="ml-[161px] mt-[26px] text-[31px] leading-[44px] text-black">les procédures pour les entreprises</div>
      <button className="ml-auto mr-[118px] mt-[22px] flex h-[55px] w-[205px] items-center rounded-[2px] bg-[#f44336] text-white">
        <svg viewBox="0 0 24 24" className="ml-[27px] h-[24px] w-[25px]" fill="none" stroke="#fff" strokeWidth="2.500">
          <circle cx="9" cy="9" r="7" />
          <path d="M14 14l8 8" strokeWidth="3.200" />
        </svg>
        <span className="ml-[25px] text-[20.8px] leading-[54px]">Recherche</span>
      </button>
    </div>
  );
}

function Breadcrumb() {
  return (
    <div className="flex h-[57px] border-b border-[#6f7478] bg-[#023e57] leading-[44px]">
      <span className="ml-[128px] mt-[5px] text-[31px] text-[#b8b1b2]">servise publique</span>
      <span className="ml-[13px] mt-[5px] text-[31px] text-[#b8b1b2]">&gt;</span>
      <span className="ml-[12px] mt-[8px] text-[30.2px] text-white">Entreprise</span>
    </div>
  );
}

function ServiceLogo() {
  return (
    <svg viewBox="0 0 102 63" className="mt-[37px] h-[63px] w-[102px]" fill="none">
      <path d="M16 0C6 4 0 9 0 15c1 14 28 25 55 28 11 2 22 1 28-1-20 1-43-5-57-15C10 18 4 9 16 0z" fill="#f20505" />
      <path d="M16 8h65v31h-5V13H21v17l-5-3z" fill="#f20505" />
      <text x="50" y="35" textAnchor="middle" fontFamily="Open Sans, sans-serif" fontSize="24" fontWeight="700" fill="#f7e600">@</text>
      <path d="M89 20c9 4 13 9 13 14-1 9-15 17-37 18C46 53 24 48 14 41c14 6 30 9 47 8 20-1 35-6 36-14 0-5-3-10-8-15z" fill="#089c24" />
      <path d="M23 50l56 1 4 12H15z" fill="#089c24" />
      <path d="M27 53h48M23 57h55" stroke="#02293e" strokeWidth="1.100" strokeDasharray="1.400 2.600" />
    </svg>
  );
}

function FooterList({ items, className }: { items: string[]; className: string }) {
  return (
    <ul className={'whitespace-nowrap text-[14.5px] leading-[23.4px] ' + className}>
      {items.map((i) => (
        <li key={i}>{i}</li>
      ))}
    </ul>
  );
}

function Footer() {
  return (
    <footer className="h-[416px] bg-[#022b40] text-white">
      <div className="flex h-[320px]">
        <div className="ml-[220px] w-[244px]">
          <ServiceLogo />
          <div className="mt-[28px] text-[14.5px] leading-[24px]">Service Public</div>
          <FooterList className="mt-[15px] text-[#bcc0c3]" items={['Particuliers', 'Entreprises', 'Documents', 'e-Services', "L'Annuaire"]} />
        </div>
        <div className="w-[243px] pt-[35px]">
          <div className="text-[14.5px] leading-[24px]">ANNUAIRE OFFICIEL</div>
          <FooterList
            className="mt-[39px] text-[#bcc0c3]"
            items={['La Présidence du Faso', 'Le Gouvernement', 'Les Membres du Gouvernement', 'Assemblée Nationale', 'Les Institutions', "Service d'Information de l'Etat", 'Le PNDES']}
          />
        </div>
        <div className="w-[244px] pt-[35px]">
          <div className="text-[14.5px] leading-[24px]">LE BURKINA FASO</div>
          <FooterList
            className="mt-[39px] text-[#bcc0c3]"
            items={['A la découverte du Burkina Faso', 'Investir au Burkina', 'Le Burkina dans le monde', 'Open Data Burkina Faso', 'La Santé', "L' Education", 'Les TIC']}
          />
        </div>
        <div className="pt-[35px]">
          <div className="text-[14.5px] leading-[24px]">CONTACT</div>
          <FooterList className="mt-[39px]" items={['(+226) 25 30 66 30', '(+226) 25 30 41 10', 'contact@servicepublic.gov.bf']} />
          <div className="mt-[15px] text-[14.5px] leading-[24px]">#Restez connecté(e)</div>
          <div className="mt-[19px] flex h-[15px] items-center text-[#666666]">
            <FaFacebookF className="h-[15px] w-[9px]" />
            <FaTwitter className="ml-[14px] h-[15px] w-[15px]" />
            <svg viewBox="0 0 17 12" className="ml-[15px] h-[12px] w-[17px]">
              <rect width="17" height="12" rx="2.500" fill="#666666" />
              <path d="M7 3.500l4 2.500-4 2.500z" fill="#022b40" />
            </svg>
          </div>
          <div className="mt-[25px] flex gap-[15px] text-[11px] leading-[16px] text-[#c4c8ca]">
            <span>Mentions légales</span>
            <span>Cookies</span>
          </div>
        </div>
      </div>
      <div className="h-[96px] bg-[linear-gradient(180deg,#052c40_0%,#052c40_70%,#022539_100%)] pt-[27px]">
        <div className="ml-[208px] h-px w-[976px] bg-[#12384a]" />
        <div className="mt-[17px] text-center text-[13.15px] leading-[20px] text-[#8d9499]">
          © Copyright 2019. Tous droits Réservés. Service Public de l'Administration du Burkina Faso
        </div>
      </div>
    </footer>
  );
}

export default function App() {
  return (
    <div className="w-[1391px] overflow-hidden bg-[#fefefe] font-['Open_Sans',sans-serif]">
      <Header />
      <Nav />
      <SearchBand />
      <Breadcrumb />
      <main className="flex h-[3310px] items-start pl-[37px]">
        <Sidebar />
        <Procedures />
      </main>
      <Footer />
    </div>
  );
}
